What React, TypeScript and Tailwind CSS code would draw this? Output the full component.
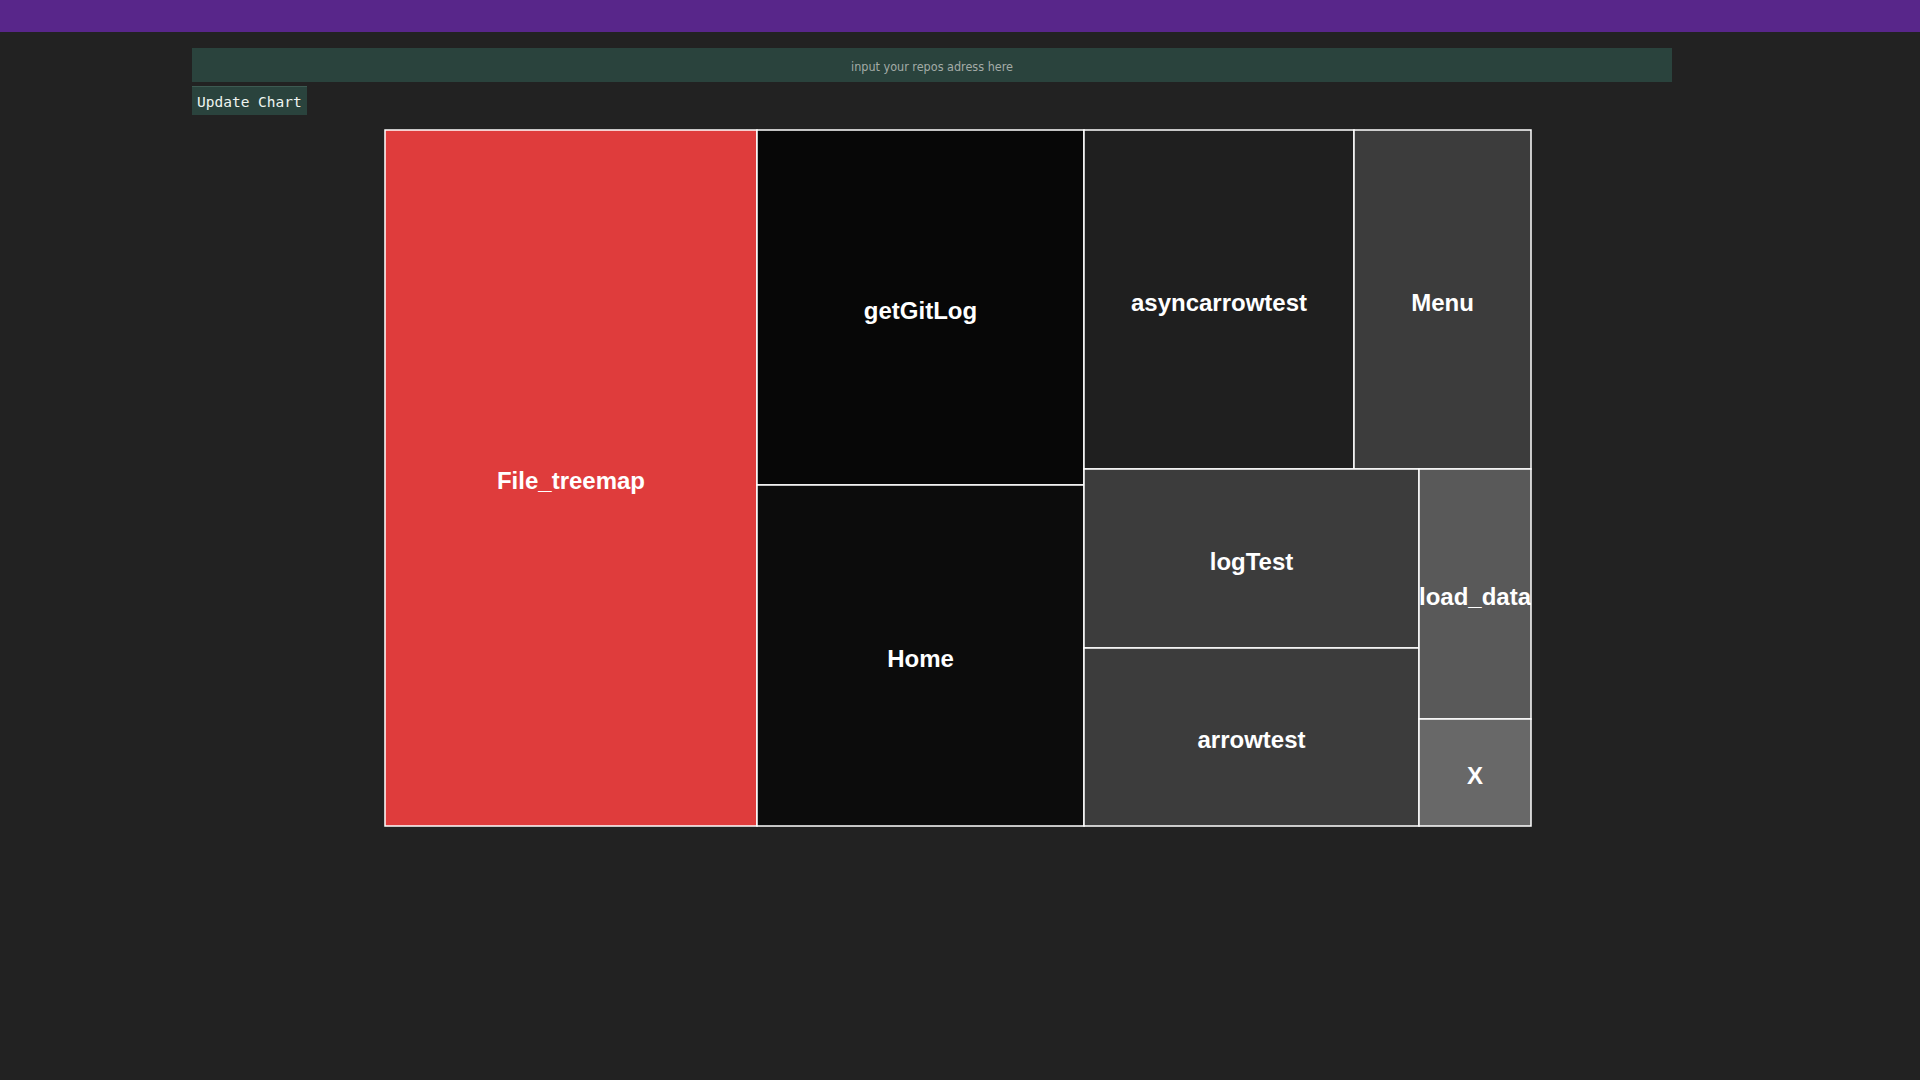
import React from 'react';

type Cell = {
  name: string;
  x0: number;
  y0: number;
  x1: number;
  y1: number;
  fill: string;
};

// treemap layout, px relative to chart origin
const cells: Cell[] = [
  { name: 'File_treemap', x0: 0, y0: 0, x1: 372, y1: 696, fill: '#df3c3c' },
  { name: 'getGitLog', x0: 372, y0: 0, x1: 699, y1: 355, fill: '#070707' },
  { name: 'Home', x0: 372, y0: 355, x1: 699, y1: 696, fill: '#0c0c0c' },
  { name: 'asyncarrowtest', x0: 699, y0: 0, x1: 969, y1: 339, fill: '#1f1f1f' },
  { name: 'Menu', x0: 969, y0: 0, x1: 1146, y1: 339, fill: '#3c3c3c' },
  { name: 'logTest', x0: 699, y0: 339, x1: 1034, y1: 518, fill: '#3c3c3c' },
  { name: 'arrowtest', x0: 699, y0: 518, x1: 1034, y1: 696, fill: '#3c3c3c' },
  { name: 'load_data', x0: 1034, y0: 339, x1: 1146, y1: 589, fill: '#595959' },
  { name: 'X', x0: 1034, y0: 589, x1: 1146, y1: 696, fill: '#686868' },
];

const Treemap: React.FC = () => (
  <svg width={1150} height={700} viewBox="-1 -1 1150 700" className="block">
    {cells.map((c) => (
      <g key={c.name}>
        <clipPath id={`clip-${c.name}`}>
          <rect x={c.x0} y={c.y0} width={c.x1 - c.x0} height={c.y1 - c.y0} />
        </clipPath>
        <rect
          x={c.x0}
          y={c.y0}
          width={c.x1 - c.x0}
          height={c.y1 - c.y0}
          fill={c.fill}
          stroke="#ffffff"
          strokeWidth={1.5}
        />
        <text
          x={(c.x0 + c.x1) / 2}
          y={(c.y0 + c.y1) / 2 + 11}
          textAnchor="middle"
          fill="#ffffff"
          clipPath={`url(#clip-${c.name})`}
          style={{ fontFamily: '"Liberation Sans", Arial, sans-serif', fontWeight: 700, fontSize: 24 }}
        >
          {c.name}
        </text>
      </g>
    ))}
  </svg>
);

export default function App() {
  return (
    <div className="min-h-screen w-full bg-[#222222]">
      <div className="h-8 w-full bg-[#58268a]" />

      <div className="ml-[192px] w-[1480px] pt-4">
        <input
          type="text"
          placeholder="input your repos adress here"
          className="block h-[34px] w-full bg-[#2a433d] pt-[2px] text-center text-[12.5px] text-[#c0c8c4] outline-none placeholder:text-[#a3aba7] [font-family:'DejaVu_Sans_Condensed','DejaVu_Sans',sans-serif] [font-stretch:condensed]"
        />
        <button className="mt-1 block h-[29px] border-t border-[#3d5a52] bg-[#2a433d] px-[5px] pt-[3px] text-[14.5px] leading-none text-[#eef5f0] [font-family:'DejaVu_Sans_Mono',monospace]">
          Update Chart
        </button>
      </div>

      <div className="ml-[384px] mt-[14px]">
        <Treemap />
      </div>
    </div>
  );
}
